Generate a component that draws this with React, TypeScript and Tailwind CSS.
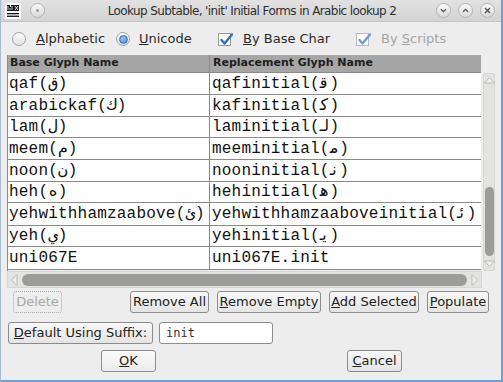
import React from "react";

const rows: { a: string; b: string; h: string }[] = [
  { a: "qaf(ق)", b: "qafinitial(ﻗ)", h: "h-[22px]" },
  { a: "arabickaf(ك)", b: "kafinitial(ﻛ)", h: "h-[22px]" },
  { a: "lam(ل)", b: "laminitial(ﻟ)", h: "h-[21px]" },
  { a: "meem(م)", b: "meeminitial(ﻣ)", h: "h-[22px]" },
  { a: "noon(ن)", b: "nooninitial(ﻧ)", h: "h-[22px]" },
  { a: "heh(ه)", b: "hehinitial(ﻫ)", h: "h-[21px]" },
  { a: "yehwithhamzaabove(ئ)", b: "yehwithhamzaaboveinitial(ﺋ)", h: "h-[23px]" },
  { a: "yeh(ي)", b: "yehinitial(ﻳ)", h: "h-[21px]" },
  { a: "uni067E", b: "uni067E.init", h: "h-[23px]" },
];

function CircleBtn({ children }: { children?: React.ReactNode }) {
  return (
    <div className="w-[15px] h-[15px] rounded-full border border-[#b4b4b4] bg-gradient-to-b from-[#fafafa] to-[#d8d8d8] flex items-center justify-center shrink-0">
      {children}
    </div>
  );
}

function Radio({ on }: { on?: boolean }) {
  return (
    <div className="w-[14px] h-[14px] rounded-full border border-[#a4a4a4] bg-gradient-to-b from-[#fdfdfd] to-[#e2e2e2] flex items-center justify-center shrink-0">
      {on && (
        <div className="w-[9px] h-[9px] rounded-full bg-[radial-gradient(circle_at_40%_35%,#9cc6f2,#3d86d6)] border border-[#3a72b4]" />
      )}
    </div>
  );
}

function Check({ dim }: { dim?: boolean }) {
  return (
    <div className={`relative w-[13px] h-[13px] border bg-white shrink-0 ${dim ? "border-[#b8b8b8]" : "border-[#9a9a9a]"}`}>
      <svg className="absolute -top-[2px] left-0" width="15" height="15" viewBox="0 0 15 15">
        <path
          d="M2.5 8 L5.5 11.5 L13 2.5"
          fill="none"
          stroke={dim ? "#6d9bd1" : "#2f6fc0"}
          strokeWidth="2.4"
          strokeLinecap="round"
          strokeLinejoin="round"
        />
      </svg>
    </div>
  );
}

function Btn({ children, w, cls = "" }: { children: React.ReactNode; w: string; cls?: string }) {
  return (
    <div
      className={`${w} h-[22px] shrink-0 rounded-[3px] border border-[#8c8c8c] bg-gradient-to-b from-[#f8f8f8] to-[#e4e4e4] flex items-center justify-center text-[13px] text-[#222] ${cls}`}
    >
      {children}
    </div>
  );
}

export default function App() {
  return (
    <div className="w-[503px] h-[382px] bg-[#ededed] border-l border-l-[#a9bccf] border-r-2 border-r-[#6aa0d6] border-b-2 border-b-[#6aa0d6] flex flex-col font-['DejaVu_Sans',sans-serif] text-[#2a2a2a] overflow-hidden">
      {/* title bar */}
      <div className="h-[22px] shrink-0 bg-gradient-to-b from-[#e2e2e2] to-[#d3d3d3] border-b border-[#c4c4c4] relative flex items-center">
        <svg className="ml-[4px] shrink-0" width="16" height="16" viewBox="0 0 16 16">
          <rect width="16" height="16" fill="#fff" />
          <path d="M2 2h3v2h1V2h3v6H2z" fill="#111" />
          <path d="M3 3v4M5 5v2M7 3v4" stroke="#fff" strokeWidth="0.8" />
          <path d="M9 2h5v6H9z" fill="#222" />
          <path d="M10 3l3 4M13 3l-3 4" stroke="#fff" strokeWidth="0.8" />
          <rect x="2" y="10" width="12" height="1.3" fill="#111" />
          <rect x="2" y="12.6" width="12" height="1.3" fill="#111" />
        </svg>
        <div className="ml-[9px]">
          <CircleBtn>
            <div className="w-[3px] h-[3px] rounded-full bg-[#9a9a9a]" />
          </CircleBtn>
        </div>
        <div className="absolute inset-0 flex items-center justify-center pl-[2px] text-[12px] text-[#2e2e2e] tracking-[-0.6px] pointer-events-none">
          Lookup Subtable, 'init' Initial Forms in Arabic lookup 2
        </div>
        <div className="ml-auto mr-[6px] flex items-center gap-[9px]">
          <CircleBtn>
            <svg width="9" height="9" viewBox="0 0 9 9">
              <path d="M2 3.2l2.5 2.5L7 3.2" fill="none" stroke="#555" strokeWidth="1.3" />
            </svg>
          </CircleBtn>
          <div className="-ml-[2px]">
            <CircleBtn>
              <svg width="9" height="9" viewBox="0 0 9 9">
                <path d="M2 5.8l2.5-2.5L7 5.8" fill="none" stroke="#555" strokeWidth="1.3" />
              </svg>
            </CircleBtn>
          </div>
          <div className="-ml-[2px]">
            <CircleBtn>
              <svg width="9" height="9" viewBox="0 0 9 9">
                <path d="M2 2l5 5M7 2l-5 5" fill="none" stroke="#555" strokeWidth="1.4" />
              </svg>
            </CircleBtn>
          </div>
        </div>
      </div>

      {/* options row */}
      <div className="h-[33px] shrink-0 flex items-center text-[13px] pl-[11px] pt-[1px]">
        <div className="w-[104px] flex items-center gap-[10px]">
          <Radio />
          <span>
            <span className="underline">A</span>lphabetic
          </span>
        </div>
        <div className="w-[102px] flex items-center gap-[9px]">
          <Radio on />
          <span>
            <span className="underline">U</span>nicode
          </span>
        </div>
        <div className="w-[138px] flex items-center gap-[12px]">
          <Check />
          <span>
            <span className="underline">B</span>y Base Char
          </span>
        </div>
        <div className="flex items-center gap-[12px] text-[#a4a4a4]">
          <Check dim />
          <span>
            By <span className="underline">S</span>cripts
          </span>
        </div>
      </div>

      {/* table + scrollbars */}
      <div className="ml-[6px] w-[490px] h-[233px] shrink-0 flex flex-col">
        <div className="flex h-[216px]">
          <div className="w-[474px] flex flex-col border-l border-[#8a8a8a] overflow-hidden">
            <div className="h-[18px] shrink-0 flex bg-[#a6a6a6] text-[11px] font-bold text-[#1e1e1e] border-b border-[#8a8a8a]">
              <div className="w-[202px] shrink-0 pl-[2px] flex items-center border-r border-[#8a8a8a]">Base Glyph Name</div>
              <div className="flex-1 pl-[3px] flex items-center">Replacement Glyph Name</div>
            </div>
            {rows.map((r) => (
              <div
                key={r.a}
                className={`${r.h} shrink-0 flex bg-white border-b border-[#8a8a8a] text-[16px] text-[#111] font-['Liberation_Mono','DejaVu_Sans_Mono','DejaVu_Sans',monospace] tracking-[0.2px] leading-none`}
              >
                <div className="w-[202px] shrink-0 pl-[1px] flex items-center border-r border-[#8a8a8a] whitespace-nowrap overflow-hidden">
                  {r.a}
                </div>
                <div className="flex-1 pl-[2px] flex items-center whitespace-nowrap">{r.b}</div>
              </div>
            ))}
          </div>
          {/* vertical scrollbar */}
          <div className="w-[16px] flex flex-col pt-[18px] pl-[2px]">
            <div className="w-[12px] flex-1 bg-[#e3e3e1] border border-[#d6d6d4] rounded-[2px] flex flex-col items-center">
              <svg className="mt-[2px]" width="11" height="8" viewBox="0 0 11 8">
                <path d="M0.5 7L5.5 1.5L10.5 7z" fill="#eeeeee" stroke="#b6b6b6" strokeWidth="0.9" />
              </svg>
              <div className="mt-auto w-[9px] h-[69px] rounded-full bg-[#9c9c9a]" />
              <svg className="mt-[4px] mb-[2px]" width="11" height="8" viewBox="0 0 11 8">
                <path d="M0.5 1L5.5 6.5L10.5 1z" fill="#eeeeee" stroke="#b6b6b6" strokeWidth="0.9" />
              </svg>
            </div>
          </div>
        </div>
        {/* horizontal scrollbar */}
        <div className="w-[475px] h-[17px] bg-[#e3e3e1] border border-[#d6d6d4] flex items-center px-[2px]">
          <svg width="8" height="12" viewBox="0 0 8 12">
            <path d="M7 0.5L1.5 6L7 11.5z" fill="#eeeeee" stroke="#b6b6b6" strokeWidth="0.9" />
          </svg>
          <div className="ml-[4px] w-[445px] h-[12px] rounded-full bg-[#9c9c9a]" />
          <svg className="ml-auto" width="8" height="12" viewBox="0 0 8 12">
            <path d="M1 0.5L6.5 6L1 11.5z" fill="#eeeeee" stroke="#b6b6b6" strokeWidth="0.9" />
          </svg>
        </div>
      </div>

      {/* button row 1 */}
      <div className="mt-[3px] h-[22px] shrink-0 flex">
        <div className="ml-[12px] w-[49px] h-[22px] rounded-[3px] border border-dotted border-[#a8a8a8] flex items-center justify-center text-[13px] text-[#a8a8a8]">
          Delete
        </div>
        <div className="ml-[68px] flex gap-[8px]">
          <Btn w="w-[79px]">Remove All</Btn>
          <Btn w="w-[104px]">
            <span>
              <span className="underline">R</span>emove Empty
            </span>
          </Btn>
          <Btn w="w-[90px]">
            <span>
              <span className="underline">A</span>dd Selected
            </span>
          </Btn>
          <Btn w="w-[62px]">
            <span>
              <span className="underline">P</span>opulate
            </span>
          </Btn>
        </div>
      </div>

      {/* suffix row */}
      <div className="mt-[9px] h-[22px] shrink-0 flex">
        <div className="ml-[7px]">
          <Btn w="w-[145px]">
            <span>
              <span className="underline">D</span>efault Using Suffix:
            </span>
          </Btn>
        </div>
        <div className="ml-[6px] w-[114px] h-[22px] bg-white border border-[#8c8c8c] rounded-[3px] flex items-center pl-[6px] text-[12px] text-[#333] font-['DejaVu_Sans_Mono',monospace]">
          init
        </div>
      </div>

      {/* ok / cancel */}
      <div className="mt-[6px] h-[22px] shrink-0 flex">
        <div className="ml-[100px]">
          <Btn w="w-[55px]" cls="border-[#5b97d6] from-[#fbfbfb] to-[#ececec]">
            <span>
              <span className="underline">O</span>K
            </span>
          </Btn>
        </div>
        <div className="ml-[191px]">
          <Btn w="w-[55px]">
            <span>
              <span className="underline">C</span>ancel
            </span>
          </Btn>
        </div>
      </div>
    </div>
  );
}
